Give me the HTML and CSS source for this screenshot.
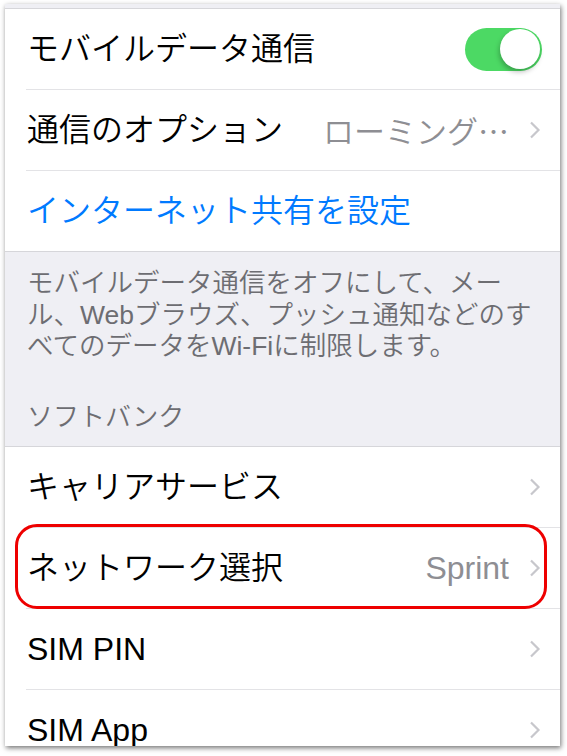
FILE: index.html
```html
<!DOCTYPE html>
<html lang="ja">
<head>
<meta charset="utf-8">
<title>モバイルデータ通信</title>
<link rel="stylesheet" href="styles.css">
</head>
<body>
<div class="frame">
  <div class="top-gap"></div>
  <ul class="group">
    <li class="cell">
      <span class="label">モバイルデータ通信</span>
      <span class="switch"><span class="knob"></span></span>
    </li>
    <li class="cell">
      <span class="label">通信のオプション</span>
      <span class="value cjk">ローミング…</span>
      <svg class="chevron" width="12" height="18" viewBox="0 0 12 18"><path d="M2 1.5 L9.5 9 L2 16.5" fill="none" stroke="#c7c7cc" stroke-width="2.2"/></svg>
    </li>
    <li class="cell">
      <span class="label link">インターネット共有を設定</span>
    </li>
  </ul>
  <div class="section-gap">
    <p class="footer">モバイルデータ通信をオフにして、メー<br>ル、Webブラウズ、プッシュ通知などのす<br>べてのデータをWi-Fiに制限します。</p>
    <p class="header">ソフトバンク</p>
  </div>
  <ul class="group">
    <li class="cell">
      <span class="label">キャリアサービス</span>
      <svg class="chevron" width="12" height="18" viewBox="0 0 12 18"><path d="M2 1.5 L9.5 9 L2 16.5" fill="none" stroke="#c7c7cc" stroke-width="2.2"/></svg>
    </li>
    <li class="cell marked">
      <span class="label">ネットワーク選択</span>
      <span class="value">Sprint</span>
      <svg class="chevron" width="12" height="18" viewBox="0 0 12 18"><path d="M2 1.5 L9.5 9 L2 16.5" fill="none" stroke="#c7c7cc" stroke-width="2.2"/></svg>
      <span class="highlight"></span>
    </li>
    <li class="cell">
      <span class="label">SIM PIN</span>
      <svg class="chevron" width="12" height="18" viewBox="0 0 12 18"><path d="M2 1.5 L9.5 9 L2 16.5" fill="none" stroke="#c7c7cc" stroke-width="2.2"/></svg>
    </li>
    <li class="cell">
      <span class="label">SIM App</span>
      <svg class="chevron" width="12" height="18" viewBox="0 0 12 18"><path d="M2 1.5 L9.5 9 L2 16.5" fill="none" stroke="#c7c7cc" stroke-width="2.2"/></svg>
    </li>
  </ul>
</div>
</body>
</html>
```
FILE: styles.css
```css
* { box-sizing: border-box; }
html, body { margin: 0; padding: 0; background: #fff; }
body {
  font-family: "Liberation Sans", "Noto Sans CJK JP", sans-serif;
  width: 567px;
  height: 756px;
  overflow: hidden;
  padding: 4px 7px 0 5px;
}
.frame {
  width: 555px;
  height: 742px;
  overflow: hidden;
  background: #efeff4;
  box-shadow: 1px 2px 5px rgba(0,0,0,0.55);
}
.top-gap {
  height: 4px;
  background: #efeff4;
}
.group {
  list-style: none;
  margin: 0;
  padding: 0;
  background: #fff;
  border-top: 1px solid #d6d6da;
  border-bottom: 1px solid #d6d6da;
}
.cell {
  position: relative;
  display: flex;
  align-items: center;
  height: 81px;
  margin-left: 21px;
  padding-left: 1px;
  padding-right: 18px;
  border-bottom: 1px solid #e3e3e6;
}
.cell:last-child { border-bottom: none; height: 80px; }
.label {
  flex: 1;
  font-size: 32px;
  line-height: 38px;
  font-weight: 350;
  color: #000;
  white-space: nowrap;
}
.link { color: #007aff; }
.value {
  font-size: 32px;
  line-height: 38px;
  font-weight: 350;
  color: #8e8e93;
  margin-right: 20px;
  white-space: nowrap;
}
.cjk { font-family: "Noto Sans CJK JP", sans-serif; font-size: 31px; }
.chevron { display: block; flex: none; margin-right: 1px; }
.switch {
  display: flex;
  justify-content: flex-end;
  align-items: center;
  width: 77px;
  height: 43px;
  border-radius: 22px;
  background: #4cd964;
  padding: 2px;
}
.knob {
  width: 40px;
  height: 40px;
  border-radius: 50%;
  background: #fff;
  box-shadow: -1px 3px 5px rgba(0,0,0,0.25);
}
.section-gap {
  height: 194px;
  padding: 16px 22px 0 22px;
  color: #6d6d72;
  font-weight: 350;
}
.footer {
  margin: 0;
  font-size: 26.5px;
  line-height: 31.5px;
  white-space: nowrap;
}
.header {
  margin: 38px 0 0 0;
  font-size: 26px;
  line-height: 32px;
}
.highlight {
  position: absolute;
  top: -4px;
  bottom: -1px;
  left: -11px;
  right: 13px;
  border: 3px solid #ee0000;
  border-radius: 22px;
  pointer-events: none;
}
```
